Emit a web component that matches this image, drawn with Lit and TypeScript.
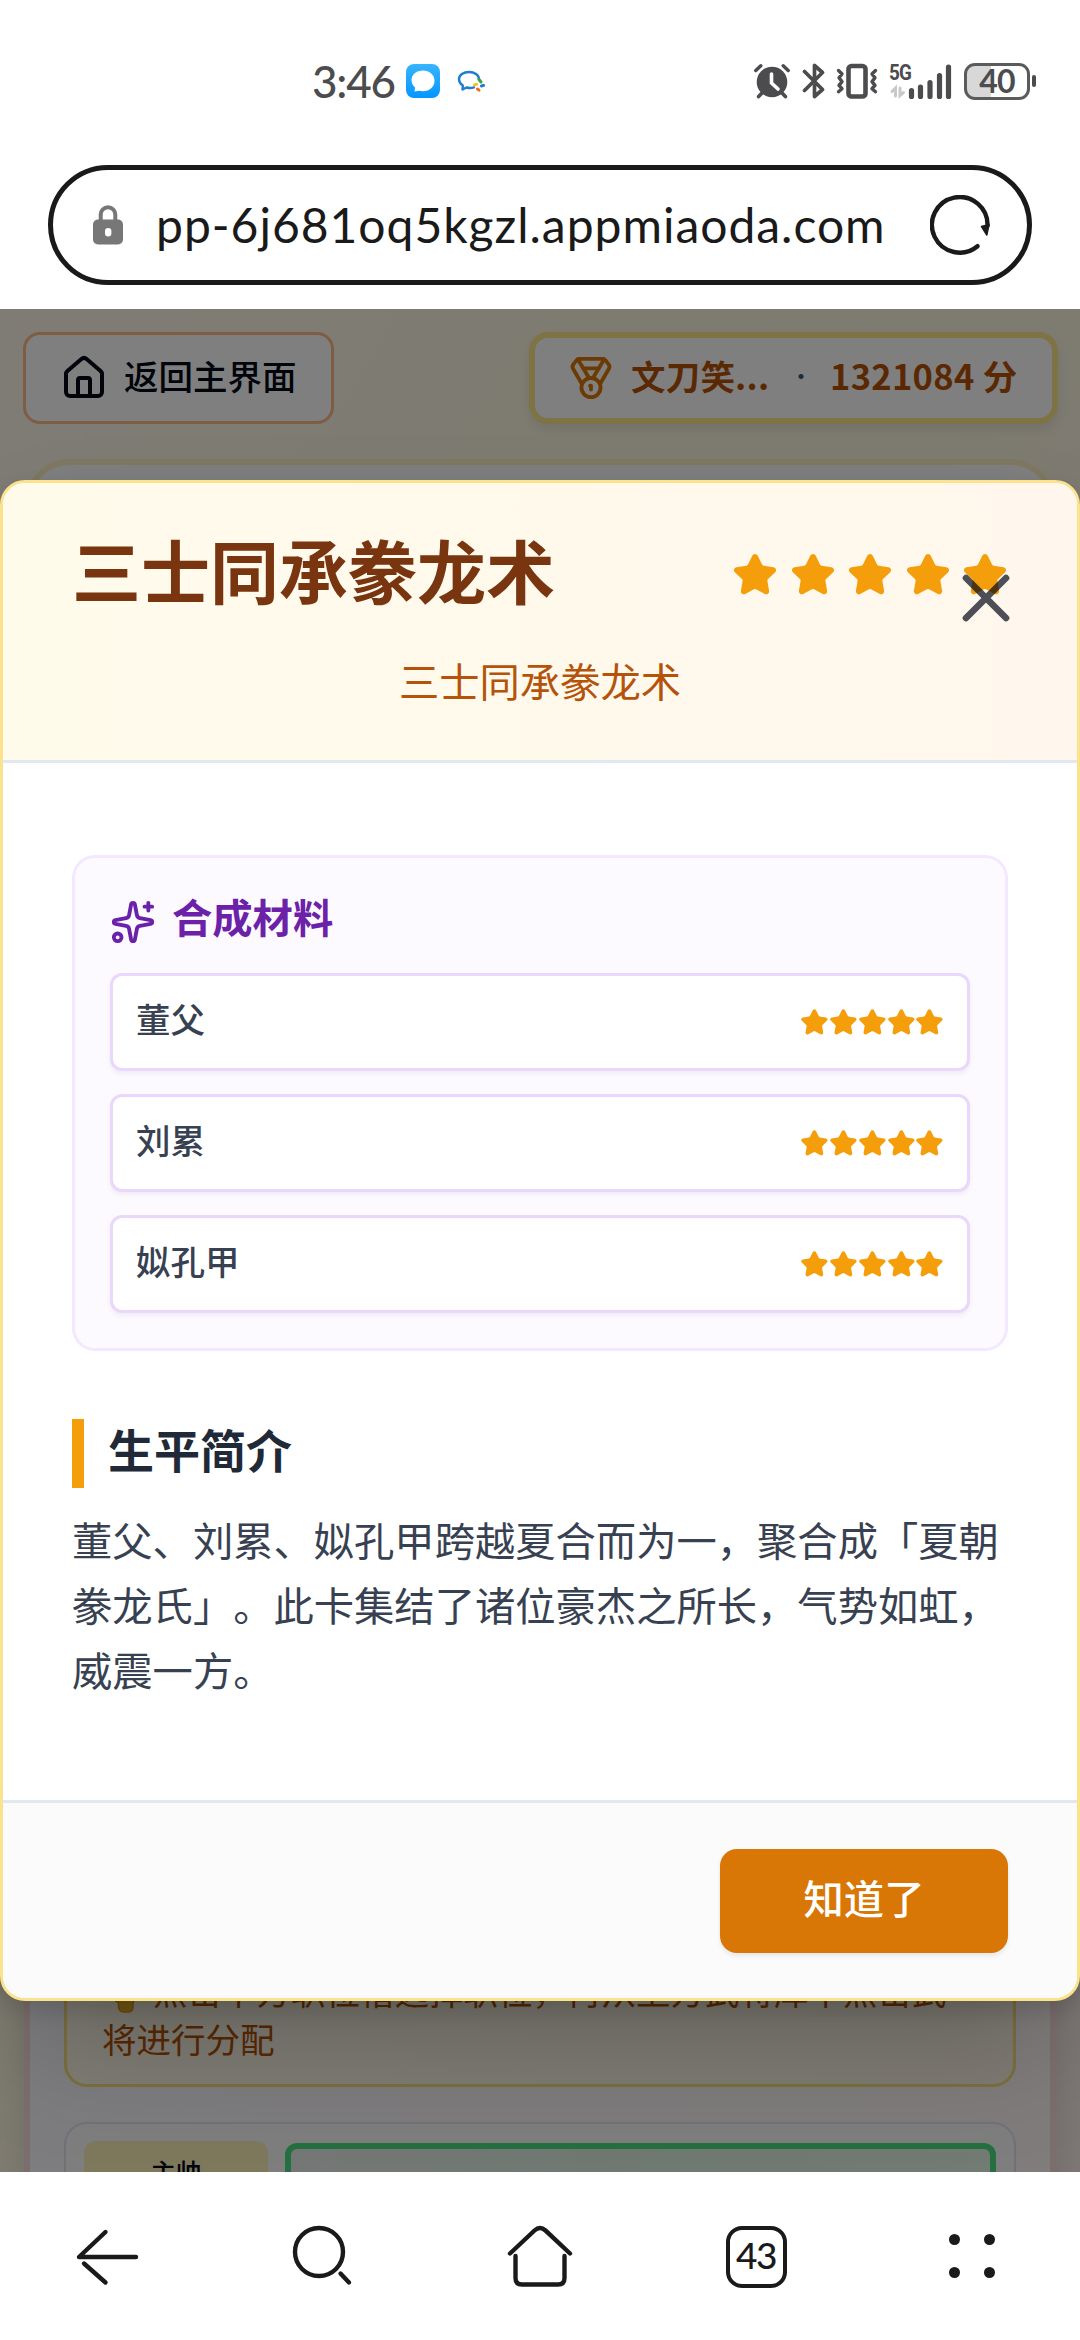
import { LitElement, html, css, svg } from "lit";
import { customElement, property } from "lit/decorators.js";

const STAR =
  "M11.525 2.295a.53.53 0 0 1 .95 0l2.31 4.679a2.123 2.123 0 0 0 1.595 1.16l5.166.756a.53.53 0 0 1 .294.904l-3.736 3.638a2.123 2.123 0 0 0-.611 1.878l.882 5.14a.53.53 0 0 1-.771.56l-4.618-2.428a2.122 2.122 0 0 0-1.973 0L6.396 21.01a.53.53 0 0 1-.77-.56l.881-5.139a2.122 2.122 0 0 0-.611-1.879L2.16 9.795a.53.53 0 0 1 .294-.906l5.165-.755a2.122 2.122 0 0 0 1.597-1.16z";

@customElement("star-rating")
export class StarRating extends LitElement {
  @property({ type: Number }) count = 5;

  static styles = css`
    :host { display: flex; gap: var(--star-gap, 0px); }
    .star { display: block; flex: none; width: var(--star-size, 28.75px); height: var(--star-size, 28.75px);
      fill: #f59e0b; stroke: #f59e0b; stroke-width: 2; stroke-linecap: round; stroke-linejoin: round; }
  `;

  render() {
    return Array.from({ length: this.count }, () => html`<svg class="star" viewBox="0 0 24 24"><path d=${STAR}></path></svg>`);
  }
}

@customElement("status-bar")
export class StatusBar extends LitElement {
  static styles = css`
    :host { display: flex; justify-content: space-between; align-items: center; height: 38px; margin: 62px 44px 0 312px;
      font-family: Lato, "Noto Sans", sans-serif; color: #4c4c4e; }
    .side { display: flex; align-items: center; }
    .time { font-size: 44px; line-height: 38px; width: 94px; font-weight: 500; letter-spacing: -1.2px; }
    svg { display: block; flex: none; }
    .chat { margin-right: 17px; }
    .alarm { margin-right: 12px; }
    .bt { margin-right: 11px; }
    .vib { margin-right: 11px; }
    .net { position: relative; width: 66px; height: 38px; margin-right: 9px; }
    .gen { position: absolute; left: 0; top: 0; font: 700 22.5px/20px Roboto, sans-serif; letter-spacing: -1px; transform: scaleX(.84); transform-origin: left; }
    .battery { display: flex; align-items: center; justify-content: center; box-sizing: border-box; width: 66px; height: 37px;
      border: 3px solid #5b5b5d; border-radius: 11px; background: linear-gradient(90deg, #d8d8d8 40%, #fff 40%);
      font-size: 32px; line-height: 30px; font-weight: 700; letter-spacing: -.8px; }
    .nub { width: 4px; height: 12px; border-radius: 2px; background: #4c4c4e; margin-left: 2px; }
  `;

  render() {
    return html`
      <div class="side">
        <span class="time">3:46</span>
        <svg class="chat" width="34" height="34" viewBox="0 0 34 34">
          <defs><linearGradient id="blue" x1="0" y1="0" x2="0" y2="1"><stop offset="0" stop-color="#38b4ff"></stop><stop offset="1" stop-color="#0496ff"></stop></linearGradient></defs>
          <rect width="34" height="34" rx="8" fill="url(#blue)"></rect>
          <path d="M17 6.5c-6.600 0-11.500 4.200-11.500 9.600 0 3.200 1.400 5.700 3.600 7.500l-.6 4 4.600-.8c1.200.3 2.500.4 3.900.4 6.600 0 11.500-4.600 11.500-10.500S23.600 6.500 17 6.500z" fill="#fff"></path>
        </svg>
        <svg width="28" height="24" viewBox="0 0 28 24" fill="none" stroke-linecap="round" stroke-linejoin="round">
          <path d="M17 18.300c-2 .8-5 .9-7.500.2L5.500 20.500l.3-4C3 14.500 2 12.500 2 10.200 2 6 6.500 3 12 3s10 3 10 7.500" stroke="#1f7ed0" stroke-width="2.400"></path>
          <path d="M22 10.500l2 2.500" stroke="#3aa53a" stroke-width="3"></path>
          <path d="M24.500 17l2-.6" stroke="#1d7dd0" stroke-width="3"></path>
          <path d="M20.500 20l1.500 1.200" stroke="#f06a2a" stroke-width="3"></path>
          <path d="M17.500 16.200l2-1" stroke="#f2c320" stroke-width="3"></path>
        </svg>
      </div>
      <div class="side">
        <svg class="alarm" width="36" height="36" viewBox="0 0 36 36" fill="none" stroke="#4c4c4e" stroke-linecap="round">
          <circle cx="18" cy="19" r="15.300" fill="#4c4c4e" stroke="none"></circle>
          <path d="M1.800 7.500l5-4.800M34.200 7.500l-5-4.800" stroke-width="3.400"></path>
          <path d="M8 30l-3.400 3.600M28 30l3.400 3.600" stroke-width="3.600"></path>
          <path d="M17.500 11v9l6.500 6" stroke="#fff" stroke-width="3.600"></path>
        </svg>
        <svg class="bt" width="23" height="36" viewBox="0 0 23 36" fill="none" stroke="#4c4c4e" stroke-width="3.700" stroke-linejoin="round" stroke-linecap="round">
          <path d="M2.500 8.500L12 18L20.500 26.500L12.500 33.500V22.500M2.500 27.500L20.500 9.500L12.500 2.500V14"></path>
        </svg>
        <svg class="vib" width="42" height="36" viewBox="0 0 42 36" fill="none" stroke="#4c4c4e" stroke-linejoin="round" stroke-linecap="round">
          <rect x="12.500" y="3" width="17" height="30.500" rx="3" stroke-width="4.600"></rect>
          <path d="M2.500 7.500l3.500 3.500-3 3.800 3 3.800-3 3.800 3 3.300-3.500 3M39.500 7.500L36 11l3 3.800-3 3.800 3 3.800-3 3.300 3.500 3" stroke-width="3.400"></path>
        </svg>
        <div class="net">
          <span class="gen">5G</span>
          <svg width="66" height="38" viewBox="0 0 66 38" fill="none" stroke-linecap="round">
            <path d="M22.500 28.500v6M31.500 25v9.500M41 20.500v14M50.500 13.500v21M59.500 5v29.500" stroke="#4c4c4e" stroke-width="5.200"></path>
            <path d="M3 29.500l3.500-3.500V34M14.500 30.500L11 33.500V26" stroke="#c8c8c8" stroke-width="3"></path>
          </svg>
        </div>
        <span class="battery">40</span><span class="nub"></span>
      </div>
    `;
  }
}

@customElement("address-bar")
export class AddressBar extends LitElement {
  static styles = css`
    :host { display: flex; align-items: center; box-sizing: border-box; height: 120px; margin: 65px 48px 0; padding: 0 37px 0 40px;
      border: 5px solid #1a1a1a; border-radius: 60px; background: #fff; }
    svg { display: block; flex: none; }
    .url { flex: 1; margin-left: 33px; font: 400 48px/60px Lato, "Noto Sans", sans-serif; color: #1a1a1a; white-space: nowrap; letter-spacing: .98px; }
  `;

  render() {
    return html`
      <svg width="30" height="40" viewBox="0 0 30 40">
        <rect x="0" y="14.500" width="30" height="25" rx="5" fill="#777"></rect>
        <path d="M7.700 16V9.500a7.300 7.300 0 0 1 14.600 0V16" fill="none" stroke="#777" stroke-width="4"></path>
        <rect x="12" y="23" width="6.400" height="8.500" rx="3.200" fill="#fff"></rect>
      </svg>
      <span class="url">pp-6j681oq5kgzl.appmiaoda.com</span>
      <svg width="60" height="60" viewBox="0 0 60 60" fill="none">
        <path d="M47.500 51.200A27.800 27.800 0 1 1 57.500 31" stroke="#1a1a1a" stroke-width="4.400" stroke-linecap="round"></path>
        <path d="M51.500 31.500L59 29.500L56.800 40z" fill="#1a1a1a" stroke="#1a1a1a" stroke-width="1.500" stroke-linejoin="round"></path>
      </svg>
    `;
  }
}

@customElement("game-page")
export class GamePage extends LitElement {
  static styles = css`
    :host { display: flex; flex-direction: column; height: 1863px; box-sizing: border-box; padding: 23px 23px 0;
      background: linear-gradient(120deg, #fdf8ea 0%, #fdf8e0 38%, #fcf3e6 68%, #f9eeea 100%);
      font-family: "Noto Sans CJK SC", sans-serif; }
    svg { display: block; flex: none; }
    .toolbar { display: flex; justify-content: space-between; height: 92px; margin-bottom: 35px; flex: none; }
    .home { display: flex; align-items: center; box-sizing: border-box; width: 311px; padding: 0 34px; gap: 16px;
      border: 3px solid #fdba84; border-radius: 17px; background: #fff; color: #020817; font-size: 34.5px; font-weight: 500; }
    .label { line-height: 40px; padding-bottom: 6px; white-space: nowrap; }
    .score { display: flex; align-items: center; box-sizing: border-box; width: 529px; padding: 0 0 0 33px; margin-right: -1px;
      border: 6px solid #fde68a; border-radius: 19px; background: #fff; color: #b45309; font-size: 34.5px; font-weight: 700;
      box-shadow: 0 6px 12px rgba(0,0,0,.08); }
    .name { margin-left: 17px; width: 149px; letter-spacing: .2px; }
    .dot { width: 42px; text-align: center; color: #475569; font-size: 24px; font-weight: 400; }
    .points { margin-left: 8px; letter-spacing: .3px; }
    .panel { box-sizing: border-box; flex: none; border: 6px solid #fdf0c4; border-radius: 46px; background: #fff; margin: 0 1px; }
    .roster { height: 650px; margin-bottom: 40px; }
    .formation { height: 1100px; border-color: #fbdcdc; padding: 777px 34px 0; background: linear-gradient(90deg, #fbfaff, #fff8f6);
      box-shadow: 0 12px 30px rgba(0,0,0,.1); }
    .tip { box-sizing: border-box; height: 155px; border: 3px solid #f7e07a; border-radius: 23px; background: linear-gradient(90deg, #fffbe8, #fff7e8);
      padding: 31px 35px 0; color: #b45309; font-size: 34.5px; line-height: 48px; white-space: nowrap; margin-bottom: 35px; }
    .line { display: flex; align-items: center; }
    .hand { margin-right: 8px; }
    .slot { box-sizing: border-box; height: 240px; border: 2px solid #e2e4ee; border-radius: 23px; background: #fcfcfe; padding: 17px 18px; display: flex; gap: 17px; }
    .role { width: 184px; height: 160px; border-radius: 12px; background: #fdf0b8; color: #020817; font-size: 25.5px; line-height: 30px; font-weight: 500;
      text-align: center; padding-top: 15px; box-sizing: border-box; }
    .seat { flex: 1; box-sizing: border-box; margin-top: 2px; border: 6px solid #4ade80; border-radius: 12px; background: linear-gradient(90deg, #ebefec, #def3e4 45%, #e4f7e8); }
  `;

  render() {
    return html`
      <div class="toolbar">
        <div class="home">
          <svg width="48" height="48" viewBox="0 0 24 24" fill="none" stroke="#020817" stroke-width="2" stroke-linecap="round" stroke-linejoin="round">
            <path d="M15 21v-8a1 1 0 0 0-1-1h-4a1 1 0 0 0-1 1v8"></path>
            <path d="M3 10a2 2 0 0 1 .709-1.528l7-5.999a2 2 0 0 1 2.582 0l7 5.999A2 2 0 0 1 21 10v9a2 2 0 0 1-2 2H5a2 2 0 0 1-2-2z"></path>
          </svg>
          <span class="label">返回主界面</span>
        </div>
        <div class="score">
          <svg width="46" height="46" viewBox="0 0 24 24" fill="none" stroke="#d97706" stroke-width="2" stroke-linecap="round" stroke-linejoin="round">
            <path d="M7.210 15 2.660 7.140a2 2 0 0 1 .13-2.200L4.400 2.800A2 2 0 0 1 6 2h12a2 2 0 0 1 1.600.8l1.600 2.140a2 2 0 0 1 .140 2.200L16.790 15"></path>
            <path d="M11 12 5.120 2.200"></path><path d="m13 12 5.880-9.800"></path><path d="M8 7h8"></path>
            <circle cx="12" cy="17" r="5"></circle><path d="M12 18v-2h-.5"></path>
          </svg>
          <span class="label name">文刀笑...</span><span class="label dot">·</span><span class="label points">1321084 分</span>
        </div>
      </div>
      <div class="panel roster"></div>
      <div class="panel formation">
        <div class="tip">
          <div class="line">
            <svg class="hand" width="43" height="48" viewBox="0 0 43 48"><path d="M8 22V10h28v14l-3 7q-1 3-2 6v4q0 5-6 5h-3q-5 0-5.500-5v-4q-5-3-6-7z" fill="#f0b429" stroke="#d99a1c" stroke-width="1.500" stroke-linejoin="round"></path></svg>
            点击下方职位槽选择职位，再从上方武将库中点击武
          </div>
          <div>将进行分配</div>
        </div>
        <div class="slot"><div class="role">主帅</div><div class="seat"></div></div>
      </div>
    `;
  }
}

@customElement("card-dialog")
export class CardDialog extends LitElement {
  private materials = [
    { name: "董父", stars: 5 },
    { name: "刘累", stars: 5 },
    { name: "姒孔甲", stars: 5 },
  ];

  static styles = css`
    :host { display: flex; flex-direction: column; position: relative; box-sizing: border-box; height: 1521px; border: 3px solid #fbe38e;
      border-radius: 25px; background: #fff; overflow: hidden; font-family: "Noto Sans CJK SC", sans-serif; }
    svg { display: block; flex: none; }
    .head { box-sizing: border-box; height: 280px; padding: 40px 69px 0; border-bottom: 3px solid #e2e8f0;
      background: linear-gradient(90deg, #fffbeb, #fff7ed); }
    .top { display: flex; justify-content: space-between; align-items: flex-start; }
    .title { margin: 0; font-size: 69px; line-height: 92px; font-weight: 700; color: #78350f; white-space: nowrap; }
    .rank { --star-size: 46px; --star-gap: 11.500px; margin-top: 29px; }
    .sub { margin: 36px 0 0; text-align: center; font-size: 40.3px; line-height: 58px; font-weight: 400; color: #b45309; }
    .close { position: absolute; top: 75px; right: 51px; opacity: .7; }
    .body { flex: 1; padding: 92px 69px 0; }
    .mats { box-sizing: border-box; padding: 35px; border: 3px solid #f3e8ff; border-radius: 23px; background: #fcfaff; }
    .mats-head { display: flex; align-items: center; gap: 16px; height: 57px; margin-bottom: 23px; }
    .mats-title { font-size: 40.3px; line-height: 44px; padding-bottom: 12px; font-weight: 700; color: #6b21a8; }
    .rows { display: flex; flex-direction: column; gap: 23px; }
    .row { display: flex; align-items: center; justify-content: space-between; box-sizing: border-box; height: 98px; padding: 0 23px;
      border: 3px solid #e9d8fb; border-radius: 12px; background: #fff; box-shadow: 0 3px 5px rgba(60,20,90,.06); }
    .row-name { font-size: 34.5px; line-height: 46px; padding-bottom: 8px; font-weight: 500; color: #374151; }
    .bio-head { box-sizing: border-box; height: 69px; margin: 68px 0 0; padding: 0 0 0 24px; border-left: 12px solid #f59e0b;
      font-size: 46px; line-height: 58px; font-weight: 700; color: #1f2937; }
    .bio { margin: 18px 0 0; font-size: 40.3px; line-height: 65.200px; color: #374151; text-spacing-trim: space-all; }
    .foot { display: flex; justify-content: flex-end; box-sizing: border-box; height: 198px; padding: 46px 69px 0; border-top: 3px solid #e2e8f0; background: #fbfbfc; }
    .ok { width: 288px; height: 104px; border: 0; border-radius: 17px; background: #d97706; color: #fff; padding: 0 0 8px;
      font: 500 40.3px/58px "Noto Sans CJK SC", sans-serif; box-shadow: 0 3px 5px rgba(0,0,0,.08); }
  `;

  render() {
    return html`
      <div class="head">
        <div class="top"><h2 class="title">三士同承豢龙术</h2><star-rating class="rank" .count=${5}></star-rating></div>
        <p class="sub">三士同承豢龙术</p>
      </div>
      <div class="body">
        <div class="mats">
          <div class="mats-head">
            <svg width="46" height="46" viewBox="0 0 24 24" fill="none" stroke="#6b21a8" stroke-width="2" stroke-linecap="round" stroke-linejoin="round">
              <path d="M11.017 2.814a1 1 0 0 1 1.966 0l1.051 5.558a2 2 0 0 0 1.594 1.594l5.558 1.051a1 1 0 0 1 0 1.966l-5.558 1.051a2 2 0 0 0-1.594 1.594l-1.051 5.558a1 1 0 0 1-1.966 0l-1.051-5.558a2 2 0 0 0-1.594-1.594l-5.558-1.051a1 1 0 0 1 0-1.966l5.558-1.051a2 2 0 0 0 1.594-1.594z"></path>
              <path d="M20 2v4"></path><path d="M22 4h-4"></path><circle cx="4" cy="20" r="2"></circle>
            </svg>
            <span class="mats-title">合成材料</span>
          </div>
          <div class="rows">
            ${this.materials.map((m) => html`<div class="row"><span class="row-name">${m.name}</span><star-rating .count=${m.stars}></star-rating></div>`)}
          </div>
        </div>
        <h3 class="bio-head">生平简介</h3>
        <p class="bio">董父、刘累、姒孔甲跨越夏合而为一，聚合成「夏朝豢龙氏」。此卡集结了诸位豪杰之所长，气势如虹，威震一方。</p>
      </div>
      <div class="foot"><button class="ok">知道了</button></div>
      <svg class="close" width="80" height="80" viewBox="0 0 24 24" fill="none" stroke="#020817" stroke-width="2" stroke-linecap="round"><path d="M18 6 6 18M6 6l12 12"></path></svg>
    `;
  }
}

const NAV_ICONS = [
  svg`<path d="M64 37H7L33.500 12M12 43.500L33.500 62.500"></path>`,
  svg`<circle cx="31" cy="32" r="24"></circle><path d="M52.500 53.500l8.500 9"></path>`,
  svg`<path d="M6 33.500L30.500 10.500Q36 5.500 41.500 10.500L66 33.500M11.500 36V58Q11.500 64.500 18 64.500H54Q60.500 64.500 60.500 58V36"></path>`,
];

@customElement("browser-nav")
export class BrowserNav extends LitElement {
  static styles = css`
    :host { display: grid; grid-template-columns: repeat(5, 1fr); align-items: center; justify-items: center; height: 168px; background: #fff; }
    svg { display: block; fill: none; stroke: #1a1a1a; stroke-width: 4.400; stroke-linecap: round; stroke-linejoin: round; }
    .tabs { box-sizing: border-box; width: 61px; height: 62px; margin-top: 2px; border: 4.500px solid #1a1a1a; border-radius: 16px; text-align: center;
      font: 500 37px/50px Lato, sans-serif; letter-spacing: -1.500px; color: #1a1a1a; }
    .more { display: grid; grid-template-columns: 11px 11px; gap: 22px 23.500px; }
    .dot { width: 11px; height: 11px; border-radius: 50%; background: #1a1a1a; }
  `;

  render() {
    return html`
      ${NAV_ICONS.map((icon) => html`<svg width="72" height="72" viewBox="0 0 72 72">${icon}</svg>`)}
      <div class="tabs">43</div>
      <div class="more">${[0, 1, 2, 3].map(() => html`<span class="dot"></span>`)}</div>
    `;
  }
}

@customElement("app-root")
export class AppRoot extends LitElement {
  static styles = css`
    :host { display: block; width: 1080px; height: 2340px; overflow: hidden; background: #fff; }
    .chrome { height: 309px; display: flow-root; background: #fff; }
    .stage { position: relative; height: 1863px; overflow: hidden; }
    .overlay { position: absolute; inset: 0; box-sizing: border-box; padding-top: 171px; background: rgba(0, 0, 0, .5); }
    .shadow { border-radius: 25px; box-shadow: 0 58px 115px -28px rgba(0,0,0,.25), 0 8px 20px rgba(0,0,0,.12); }
  `;

  render() {
    return html`
      <div class="chrome"><status-bar></status-bar><address-bar></address-bar></div>
      <div class="stage">
        <game-page></game-page>
        <div class="overlay"><card-dialog class="shadow"></card-dialog></div>
      </div>
      <browser-nav></browser-nav>
    `;
  }
}
